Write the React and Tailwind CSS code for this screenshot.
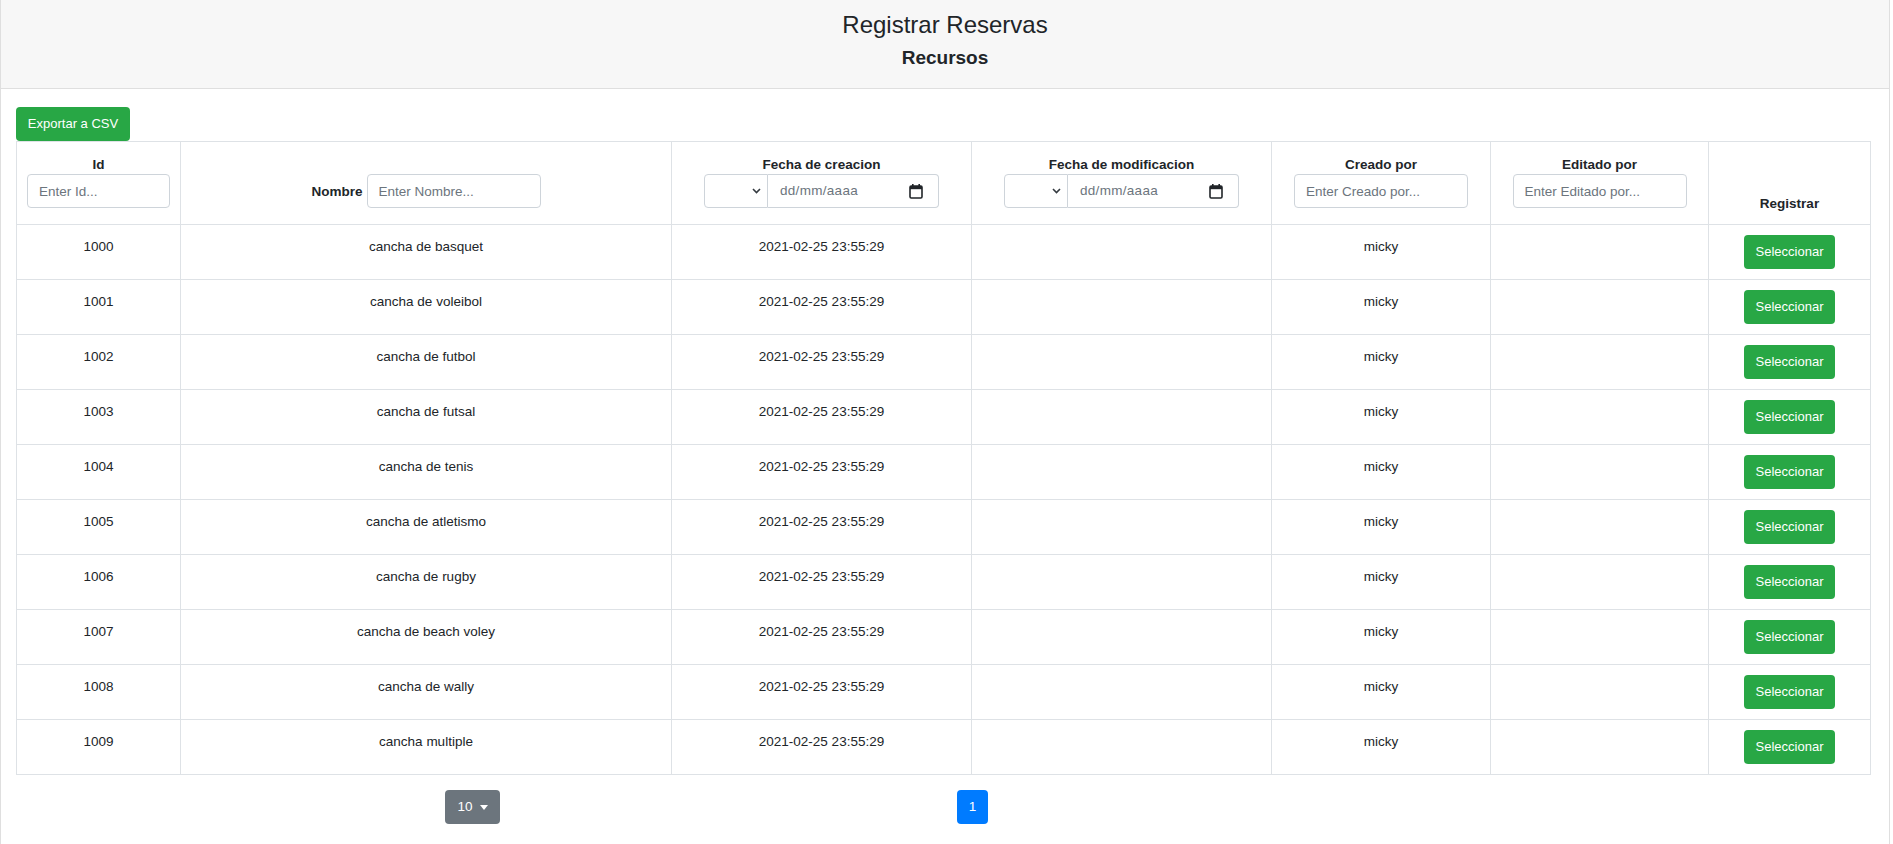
import React from "react";

const rows = [
  { id: 1000, nombre: "cancha de basquet" },
  { id: 1001, nombre: "cancha de voleibol" },
  { id: 1002, nombre: "cancha de futbol" },
  { id: 1003, nombre: "cancha de futsal" },
  { id: 1004, nombre: "cancha de tenis" },
  { id: 1005, nombre: "cancha de atletismo" },
  { id: 1006, nombre: "cancha de rugby" },
  { id: 1007, nombre: "cancha de beach voley" },
  { id: 1008, nombre: "cancha de wally" },
  { id: 1009, nombre: "cancha multiple" },
];

const TextFilter = ({ placeholder, className = "" }) => (
  <input
    type="text"
    placeholder={placeholder}
    className={`h-[34px] rounded border border-[#ced4da] bg-white px-[11px] text-[13.5px] font-normal text-[#495057] placeholder:text-[#6c757d] outline-none ${className}`}
  />
);

const DateFilter = () => (
  <div className="flex justify-center font-normal">
    <div className="flex h-[34px] w-[64px] items-center justify-end rounded-l border border-[#ced4da] bg-white pr-[6px]">
      <svg width="9" height="6" viewBox="0 0 9 6">
        <path d="M1 1l3.5 3.5L8 1" fill="none" stroke="#343a40" strokeWidth="1.6" />
      </svg>
    </div>
    <div className="flex h-[34px] w-[171px] items-center justify-between rounded-r border border-l-0 border-[#ced4da] bg-white pl-[12px] pr-[15px]">
      <span className="text-[13.5px] font-normal tracking-[0.3px] text-[#6c757d]">dd/mm/aaaa</span>
      <svg width="14" height="15" viewBox="0 0 14 15">
        <rect x="1" y="2" width="12" height="12" rx="1.2" fill="none" stroke="#212529" strokeWidth="1.6" />
        <rect x="1" y="2" width="12" height="3.2" fill="#212529" />
        <rect x="3" y="0" width="1.6" height="3" fill="#212529" />
        <rect x="9.4" y="0" width="1.6" height="3" fill="#212529" />
      </svg>
    </div>
  </div>
);

const Label = ({ children }) => (
  <div className="text-[13.5px] font-bold leading-[19px] text-[#212529]">{children}</div>
);

export default function App() {
  return (
    <div className="min-h-[844px] w-[1893px] bg-white font-['Liberation_Sans',Arial,sans-serif] text-[#212529]">
      <div className="min-h-[844px] w-[1890px] border-x border-[#dfdfdf]">
        <div className="h-[89px] border-b border-[#dfdfdf] bg-[#f7f7f7] pt-[10px] text-center">
          <h3 className="text-[24px] leading-[29px]">Registrar Reservas</h3>
          <h4 className="mt-[7px] text-[19px] font-bold leading-[23px]">Recursos</h4>
        </div>

        <div className="pl-[15px] pt-[18px]">
          <button className="flex h-[34px] w-[114px] items-center justify-center rounded bg-[#28a745] text-[13px] text-white">
            Exportar a CSV
          </button>

          <table className="w-[1854px] table-fixed border-collapse text-[13.5px]">
            <colgroup>
              <col className="w-[164px]" />
              <col className="w-[491px]" />
              <col className="w-[300px]" />
              <col className="w-[300px]" />
              <col className="w-[219px]" />
              <col className="w-[218px]" />
              <col className="w-[162px]" />
            </colgroup>
            <thead>
              <tr className="h-[83px]">
                <th className="border border-[#dee2e6] px-[10px] pb-[16px] align-bottom">
                  <Label>Id</Label>
                  <TextFilter placeholder="Enter Id..." className="block w-full" />
                </th>
                <th className="border border-[#dee2e6] px-3 pb-[16px] align-bottom">
                  <div className="flex items-center justify-center gap-[4px]">
                    <Label>Nombre</Label>
                    <TextFilter placeholder="Enter Nombre..." className="w-[174px]" />
                  </div>
                </th>
                <th className="border border-[#dee2e6] px-3 pb-[16px] align-bottom">
                  <Label>Fecha de creacion</Label>
                  <DateFilter />
                </th>
                <th className="border border-[#dee2e6] px-3 pb-[16px] align-bottom">
                  <Label>Fecha de modificacion</Label>
                  <DateFilter />
                </th>
                <th className="border border-[#dee2e6] px-3 pb-[16px] align-bottom">
                  <Label>Creado por</Label>
                  <TextFilter placeholder="Enter Creado por..." className="mx-auto block w-[174px]" />
                </th>
                <th className="border border-[#dee2e6] px-3 pb-[16px] align-bottom">
                  <Label>Editado por</Label>
                  <TextFilter placeholder="Enter Editado por..." className="mx-auto block w-[174px]" />
                </th>
                <th className="border border-[#dee2e6] px-3 pb-[11px] align-bottom">
                  <Label>Registrar</Label>
                </th>
              </tr>
            </thead>
            <tbody>
              {rows.map((r) => (
                <tr key={r.id} className="h-[55px]">
                  <td className="border border-[#dee2e6] px-3 pt-[12px] text-center align-top leading-[20px]">{r.id}</td>
                  <td className="border border-[#dee2e6] px-3 pt-[12px] text-center align-top leading-[20px]">{r.nombre}</td>
                  <td className="border border-[#dee2e6] px-3 pt-[12px] text-center align-top leading-[20px]">2021-02-25 23:55:29</td>
                  <td className="border border-[#dee2e6] px-3 pt-[12px] text-center align-top leading-[20px]"></td>
                  <td className="border border-[#dee2e6] px-3 pt-[12px] text-center align-top leading-[20px]">micky</td>
                  <td className="border border-[#dee2e6] px-3 pt-[12px] text-center align-top leading-[20px]"></td>
                  <td className="border border-[#dee2e6] px-3 pt-[10px] align-top">
                    <button className="mx-auto flex h-[34px] w-[91px] items-center justify-center rounded bg-[#28a745] text-[13px] text-white">
                      Seleccionar
                    </button>
                  </td>
                </tr>
              ))}
            </tbody>
          </table>

          <div className="mt-[15px] flex">
            <div className="flex w-[913px] justify-center">
              <button className="flex h-[34px] w-[55px] items-center justify-center gap-[7px] rounded bg-[#6c757d] text-[13.5px] text-white">
                10
                <svg width="8" height="5" viewBox="0 0 8 5">
                  <path d="M0 0h8L4 5z" fill="#fff" />
                </svg>
              </button>
            </div>
            <div className="pl-[28px]">
              <button className="flex h-[34px] w-[31px] items-center justify-center rounded bg-[#007bff] text-[13.5px] text-white">
                1
              </button>
            </div>
          </div>
        </div>
      </div>
    </div>
  );
}
